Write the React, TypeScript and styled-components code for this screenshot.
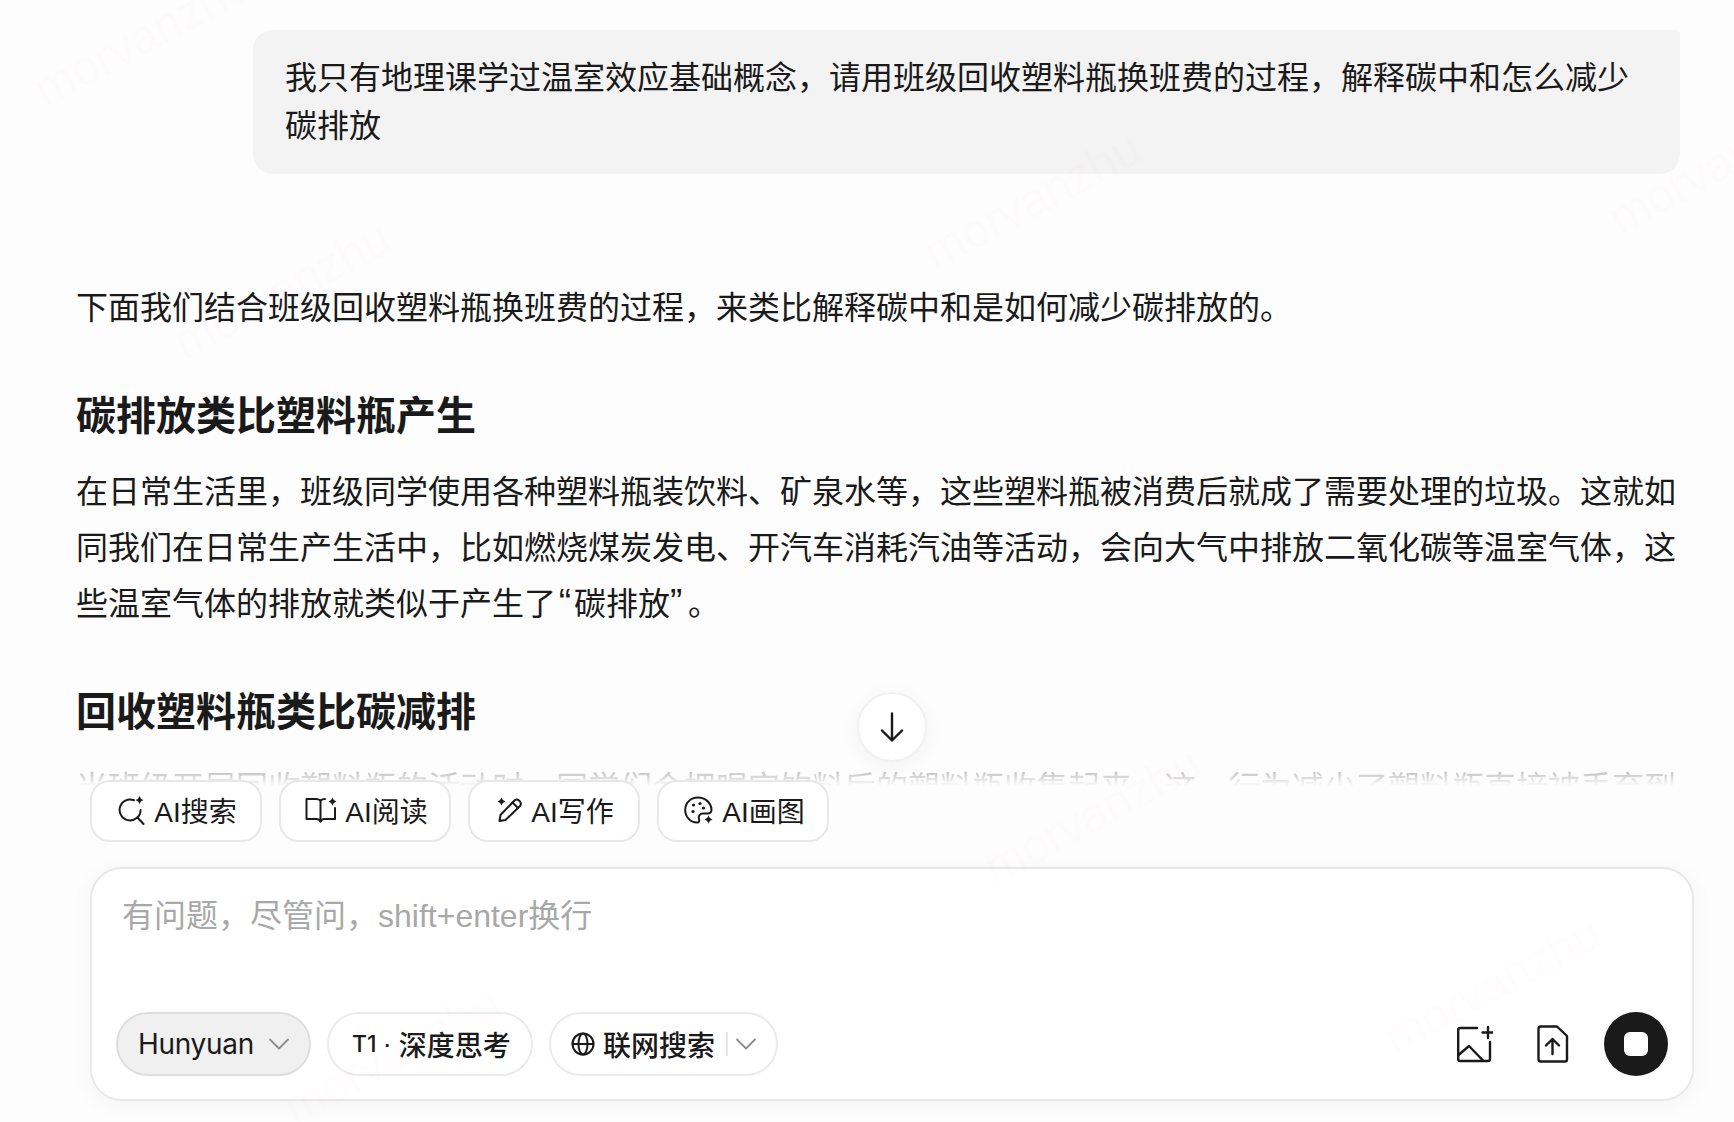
import React from "react";
import styled, { createGlobalStyle } from "styled-components";

const GlobalStyle = createGlobalStyle`
  html, body {
    margin: 0;
    padding: 0;
    background: #fdfdfd;
  }
  * {
    box-sizing: border-box;
  }
`;

const Page = styled.div`
  position: relative;
  width: 1734px;
  height: 1122px;
  display: flex;
  flex-direction: column;
  overflow: hidden;
  background: #fdfdfd;
  color: #1a1a1a;
  font-family: "Liberation Sans", "Noto Sans CJK SC", sans-serif;
`;

const Transcript = styled.main`
  position: relative;
  flex: 1;
  min-height: 0;
  overflow: hidden;
  padding: 30px 54px 0 76px;

  &::after {
    content: "";
    position: absolute;
    left: 0;
    right: 0;
    bottom: 0;
    height: 56px;
    background: linear-gradient(to bottom, rgba(253, 253, 253, 0), #fdfdfd);
  }
`;

const UserBubble = styled.div`
  margin-left: 177px;
  padding: 24px 32px;
  background: #f3f3f3;
  border-radius: 20px 4px 20px 20px;
  font-size: 32px;
  line-height: 48px;
`;

const Intro = styled.p`
  margin: 106px 0 52px;
  font-size: 32px;
  line-height: 56px;
`;

const Heading = styled.h2`
  margin: 0 0 20px;
  font-size: 40px;
  line-height: 56px;
  font-weight: 700;
`;

const Paragraph = styled.p`
  margin: 0 0 52px;
  font-size: 32px;
  line-height: 56px;
`;

const QuoteMark = styled.span<{ $open?: boolean }>`
  display: inline-block;
  width: 18px;
  font-size: 37px;
  line-height: 40px;
  text-align: ${(p) => (p.$open ? "center" : "left")};
`;

const ScrollDown = styled.button`
  position: absolute;
  left: 857px;
  top: 692px;
  width: 70px;
  height: 70px;
  display: flex;
  align-items: center;
  justify-content: center;
  padding: 0;
  background: #fff;
  border: 2px solid #f0f0f0;
  border-radius: 50%;
  box-shadow: 0 4px 20px rgba(0, 0, 0, 0.05);
  color: #1a1a1a;
`;

const Dock = styled.section`
  position: relative;
  margin-top: -6px;
  padding: 0 40px 21px 90px;
`;

const ChipRow = styled.div`
  display: flex;
  gap: 17px;
  margin-bottom: 25px;
`;

const Chip = styled.button`
  width: 172px;
  height: 62px;
  display: flex;
  align-items: center;
  justify-content: center;
  gap: 8px;
  padding: 0 0 2px 3px;
  background: #fff;
  border: 2px solid #e8e8e8;
  border-radius: 20px;
  color: #1a1a1a;
  font-family: inherit;
  font-size: 28px;
`;

const Composer = styled.div`
  height: 234px;
  display: flex;
  flex-direction: column;
  justify-content: space-between;
  padding: 23px 24px;
  background: #fff;
  border: 2px solid #e8e8e8;
  border-radius: 32px;
  box-shadow: 0 4px 24px rgba(0, 0, 0, 0.04);
`;

const Prompt = styled.textarea`
  height: 48px;
  padding: 0 0 0 6px;
  border: 0;
  outline: 0;
  resize: none;
  background: transparent;
  font-family: inherit;
  font-size: 32px;
  line-height: 48px;

  &::placeholder {
    color: #a8a8a8;
    opacity: 1;
  }
`;

const Toolbar = styled.div`
  display: flex;
  align-items: center;
  gap: 16px;
`;

const Pill = styled.button<{ $active?: boolean }>`
  height: 64px;
  display: flex;
  align-items: center;
  padding: 0 20px;
  background: ${(p) => (p.$active ? "#f0f0f0" : "#fff")};
  border: 2px solid ${(p) => (p.$active ? "#dedede" : "#ebebeb")};
  border-radius: 32px;
  color: #1a1a1a;
  font-family: inherit;
  font-size: 28px;
  font-weight: 500;
  white-space: nowrap;
`;

const ModelName = styled.span`
  margin-right: 15px;
  font-family: "Inter", sans-serif;
  font-weight: 400;
  letter-spacing: -0.3px;
`;

const ModeTag = styled.span`
  margin: 0 0 0 3px;
  font-family: "Inter", sans-serif;
  font-size: 23px;
`;

const ModeDot = styled.span`
  margin: 0 7px 0 6px;
`;

const PillLabel = styled.span`
  margin-left: 8px;
`;

const Divider = styled.span`
  width: 2px;
  height: 24px;
  margin: 0 8px 0 11px;
  background: #e8e8e8;
`;

const Spacer = styled.div`
  flex: 1;
`;

const IconButton = styled.button<{ $gap: number }>`
  display: flex;
  margin-right: ${(p) => p.$gap}px;
  padding: 0;
  background: none;
  border: 0;
  color: #1a1a1a;
`;

const StopButton = styled.button`
  width: 64px;
  height: 64px;
  display: flex;
  align-items: center;
  justify-content: center;
  padding: 0;
  background: #1a1a1a;
  border: 0;
  border-radius: 50%;
`;

const StopMark = styled.span`
  width: 24px;
  height: 24px;
  background: #fff;
  border-radius: 6px;
`;

const Watermark = styled.span<{ $x: number; $y: number }>`
  position: absolute;
  left: ${(p) => p.$x}px;
  top: ${(p) => p.$y}px;
  font-size: 48px;
  color: rgba(226, 170, 190, 0.04);
  white-space: nowrap;
  pointer-events: none;
  transform: rotate(-28deg);
  transform-origin: left bottom;
`;

const Sparkle = ({ x, y, r }: { x: number; y: number; r: number }) => (
  <path
    d={`M${x} ${y - r}Q${x + r * 0.2} ${y - r * 0.2} ${x + r} ${y}Q${x + r * 0.2} ${y + r * 0.2} ${x} ${y + r}Q${x - r * 0.2} ${y + r * 0.2} ${x - r} ${y}Q${x - r * 0.2} ${y - r * 0.2} ${x} ${y - r}Z`}
    fill="currentColor"
    stroke="none"
  />
);

const lineIcon = {
  fill: "none",
  stroke: "currentColor",
  strokeLinecap: "round" as const,
  strokeLinejoin: "round" as const,
};

const SearchIcon = () => (
  <svg width="28" height="30" viewBox="0 0 28 30" {...lineIcon} strokeWidth="2">
    <path d="M16 5.2A10.5 10.5 0 1 0 22.6 15" />
    <path d="M19.5 22.5L25.5 29" />
    <Sparkle x={21.5} y={5} r={4} />
  </svg>
);

const BookIcon = () => (
  <svg width="32" height="26" viewBox="0 0 32 26" {...lineIcon} strokeWidth="2">
    <path d="M15.5 3.5C14 2.4 13 2 11 2H1.5V22H11.5C13.5 22 14.8 22.8 15.5 24.5C16.2 22.8 17.5 22 19.5 22H30V11" />
    <path d="M15.5 3.5V24.5" />
    <path d="M15.5 3.5C16.8 2.4 18 2 20 2" />
    <Sparkle x={27.5} y={4.5} r={4} />
  </svg>
);

const PenIcon = () => (
  <svg width="26" height="26" viewBox="0 0 26 26" {...lineIcon} strokeWidth="2">
    <path d="M2.5 24L3.5 18L17.5 3.5Q19.8 1.5 22 3.5L23 4.5Q24.8 6.8 23 9L8.5 23Z" />
    <path d="M15.5 5.5L21 11" />
    <Sparkle x={4.5} y={4.5} r={4} />
  </svg>
);

const PaletteIcon = () => (
  <svg width="30" height="28" viewBox="0 0 30 28" {...lineIcon} strokeWidth="2">
    <path d="M14 1.5C6.5 1.5 1.2 7 1.2 14C1.2 21 6.5 26.5 13 26.5C15.5 26.5 15.5 24.5 15 23C14 20 16 17.5 19 17.5H23.5C26 17.5 27.5 16 27.5 13.5C27 6.5 21 1.5 14 1.5Z" />
    <circle cx="9.5" cy="9" r="1.6" fill="currentColor" stroke="none" />
    <circle cx="16" cy="7.5" r="1.6" fill="currentColor" stroke="none" />
    <circle cx="9" cy="15.5" r="1.6" fill="currentColor" stroke="none" />
    <circle cx="19.5" cy="12" r="1.6" fill="currentColor" stroke="none" />
    <Sparkle x={24.5} y={23.5} r={4.2} />
  </svg>
);

const GlobeIcon = () => (
  <svg width="24" height="24" viewBox="0 0 24 24" {...lineIcon} strokeWidth="2">
    <circle cx="12" cy="12" r="10.5" />
    <ellipse cx="12" cy="12" rx="4.5" ry="10.5" />
    <path d="M1.5 12H22.5" />
  </svg>
);

const Chevron = () => (
  <svg
    width="20"
    height="12"
    viewBox="0 0 20 12"
    fill="none"
    stroke="#8c8c8c"
    strokeWidth="1.8"
    strokeLinecap="round"
    strokeLinejoin="round"
  >
    <path d="M1 1.5L10 10.5L19 1.5" />
  </svg>
);

const ArrowDownIcon = () => (
  <svg width="24" height="30" viewBox="0 0 24 30" {...lineIcon} strokeWidth="2.4">
    <path d="M12 1.5V28M2 18.5L12 28.5L22 18.5" />
  </svg>
);

const ImageAddIcon = () => (
  <svg width="36" height="38" viewBox="0 0 36 38" {...lineIcon} strokeWidth="2.4">
    <path d="M20 3H3Q1.2 3 1.2 5V34Q1.2 36 3 36H31Q33 36 33 34V17" />
    <path d="M1.5 30L12 21L26 35.5" />
    <path d="M31 2V13M25.5 7.5H35.5" />
  </svg>
);

const FileUploadIcon = () => (
  <svg width="32" height="38" viewBox="0 0 32 38" {...lineIcon} strokeWidth="2.4">
    <path d="M3.5 1.5H20L30 11V34.5Q30 36.5 28 36.5H3.5Q1.5 36.5 1.5 34.5V3.5Q1.5 1.5 3.5 1.5Z" />
    <path d="M15.5 29V14M9 20.5L15.5 14L22 20.5" />
  </svg>
);

const watermarks = [
  { x: 50, y: 62 },
  { x: 190, y: 315 },
  { x: 940, y: 225 },
  { x: 1625, y: 190 },
  { x: 1000, y: 840 },
  { x: 1400, y: 1010 },
  { x: 300, y: 1080 },
];

export default function App() {
  return (
    <Page>
      <GlobalStyle />
      <Transcript>
        <UserBubble>
          我只有地理课学过温室效应基础概念，请用班级回收塑料瓶换班费的过程，解释碳中和怎么减少碳排放
        </UserBubble>
        <Intro>下面我们结合班级回收塑料瓶换班费的过程，来类比解释碳中和是如何减少碳排放的。</Intro>
        <Heading>碳排放类比塑料瓶产生</Heading>
        <Paragraph>
          在日常生活里，班级同学使用各种塑料瓶装饮料、矿泉水等，这些塑料瓶被消费后就成了需要处理的垃圾。这就如同我们在日常生产生活中，比如燃烧煤炭发电、开汽车消耗汽油等活动，会向大气中排放二氧化碳等温室气体，这些温室气体的排放就类似于产生了
          <QuoteMark $open>“</QuoteMark>碳排放<QuoteMark>”</QuoteMark>。
        </Paragraph>
        <Heading>回收塑料瓶类比碳减排</Heading>
        <Paragraph>
          当班级开展回收塑料瓶的活动时，同学们会把喝完饮料后的塑料瓶收集起来，这一行为减少了塑料瓶直接被丢弃到环境中的数量。
        </Paragraph>
      </Transcript>
      <ScrollDown aria-label="scroll to bottom">
        <ArrowDownIcon />
      </ScrollDown>
      <Dock>
        <ChipRow>
          <Chip>
            <SearchIcon />
            AI搜索
          </Chip>
          <Chip>
            <BookIcon />
            AI阅读
          </Chip>
          <Chip>
            <PenIcon />
            AI写作
          </Chip>
          <Chip>
            <PaletteIcon />
            AI画图
          </Chip>
        </ChipRow>
        <Composer>
          <Prompt placeholder="有问题，尽管问，shift+enter换行" />
          <Toolbar>
            <Pill $active>
              <ModelName>Hunyuan</ModelName>
              <Chevron />
            </Pill>
            <Pill>
              <ModeTag>T1</ModeTag>
              <ModeDot>·</ModeDot>
              深度思考
            </Pill>
            <Pill>
              <GlobeIcon />
              <PillLabel>联网搜索</PillLabel>
              <Divider />
              <Chevron />
            </Pill>
            <Spacer />
            <IconButton $gap={28} aria-label="add image">
              <ImageAddIcon />
            </IconButton>
            <IconButton $gap={19} aria-label="upload file">
              <FileUploadIcon />
            </IconButton>
            <StopButton aria-label="stop">
              <StopMark />
            </StopButton>
          </Toolbar>
        </Composer>
      </Dock>
      {watermarks.map((w) => (
        <Watermark key={`${w.x}-${w.y}`} $x={w.x} $y={w.y}>
          morvanzhu
        </Watermark>
      ))}
    </Page>
  );
}
